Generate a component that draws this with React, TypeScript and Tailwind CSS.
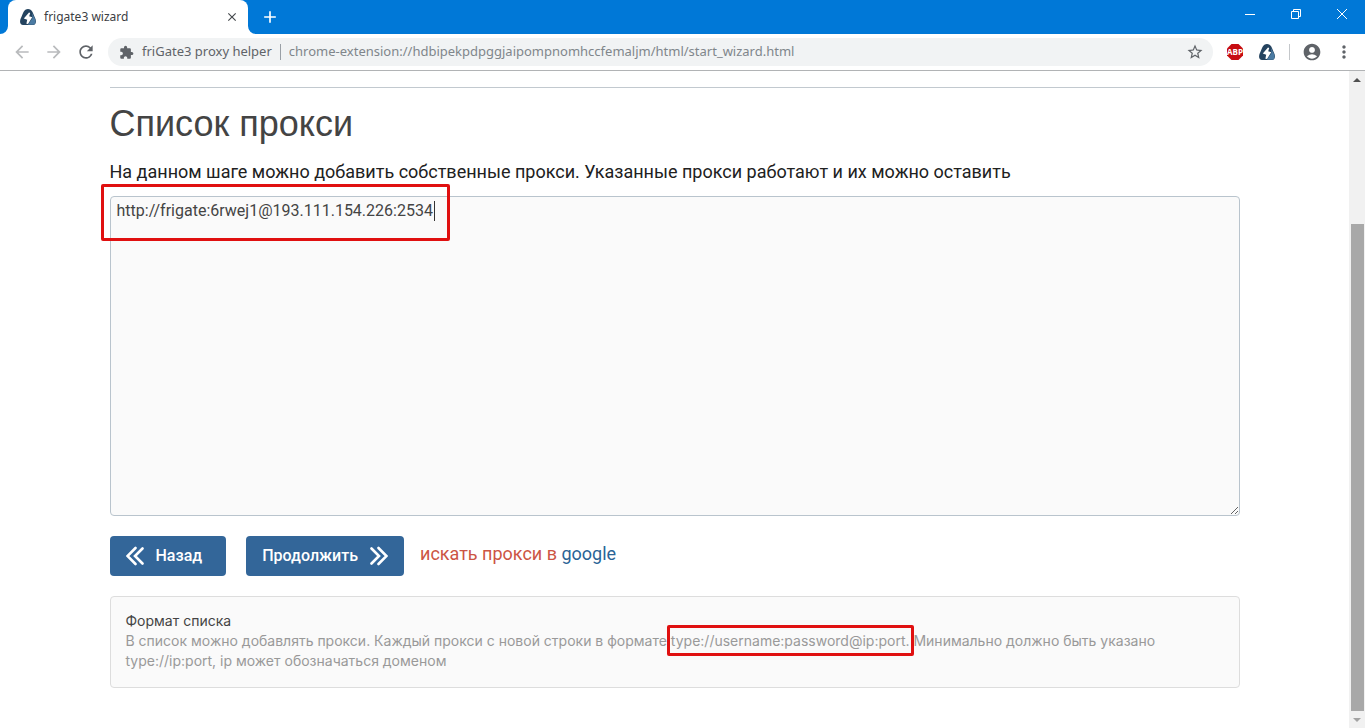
import type { ReactNode } from 'react'
import {
  MdAccountCircle,
  MdAdd,
  MdArrowBack,
  MdArrowForward,
  MdClose,
  MdExtension,
  MdMoreVert,
  MdRefresh,
  MdStarBorder,
} from 'react-icons/md'

const PAGE_URL = 'chrome-extension://hdbipekpdpggjaipompnomhccfemaljm/html/start_wizard.html'
const PROXY = 'http://frigate:6rwej1@193.111.154.226:2534'

function FrigateLogo() {
  return (
    <svg viewBox="0 0 16 16" className="w-4 h-4 shrink-0" aria-hidden="true">
      <path
        d="M8 0C10 0 11.400 1 12.500 3L15.500 10C16.500 13.400 15.600 16 13 16H3C.4 16-.5 13.400.5 10L3.500 3C4.600 1 6 0 8 0Z"
        fill="#24435f"
      />
      <path d="M12 4L15.300 10.500C16 13.800 15 15.800 12.800 15.800H8L12.500 9Z" fill="#4b7ba3" />
      <path d="M9 3.600L3.800 9.500L7.200 10.700L6.400 14.800L8 15L12.200 8.200L9.200 7.200L10.200 4Z" fill="#fff" />
    </svg>
  )
}

function AdblockLogo() {
  return (
    <svg viewBox="0 0 18 18" className="w-[18px] h-[18px]" aria-hidden="true">
      <path d="M5.500 1h7L17 5.500v7L12.500 17h-7L1 12.500v-7Z" fill="#c70d12" />
      <text x="9" y="12" textAnchor="middle" fontSize="8" fontWeight="700" fill="#fff" fontFamily="Open Sans, sans-serif">
        ABP
      </text>
    </svg>
  )
}

function DoubleChevron({ dir }: { dir: 'left' | 'right' }) {
  return (
    <svg
      viewBox="0 0 20 20"
      className="w-5 h-5"
      fill="none"
      stroke="currentColor"
      strokeWidth="2.600"
      strokeLinecap="round"
      aria-hidden="true"
    >
      {dir === 'left' ? (
        <path d="M9.500 2L1.500 10L9.500 18M16.500 2.500L9 10L16.500 17.500" />
      ) : (
        <path d="M10.500 2L18.500 10L10.500 18M3.500 2.500L11 10L3.500 17.500" />
      )}
    </svg>
  )
}

function ToolButton({ label, className = '', children }: { label: string; className?: string; children: ReactNode }) {
  return (
    <button type="button" aria-label={label} className={`flex w-8 h-7 shrink-0 items-center justify-center ${className}`}>
      {children}
    </button>
  )
}

function WindowButton({ label, children }: { label: string; children: ReactNode }) {
  return (
    <button type="button" aria-label={label} className="flex w-[46px] h-7 items-center justify-center text-white">
      <svg viewBox="0 0 12 12" className="w-3 h-3" fill="none" stroke="currentColor" aria-hidden="true">
        {children}
      </svg>
    </button>
  )
}

function TitleBar() {
  return (
    <div className="flex h-[34px] bg-[#0078d7]">
      <svg viewBox="0 0 8 8" className="w-2 h-2 self-end" aria-hidden="true">
        <path d="M8 0v8H0a8 8 0 0 0 8-8Z" fill="#fff" />
      </svg>
      <div className="flex w-60 items-center rounded-t-lg bg-white pl-3 pr-2">
        <FrigateLogo />
        <span className="ml-2 flex-1 text-xs text-[#3c4043]">frigate3 wizard</span>
        <button type="button" aria-label="Закрыть вкладку" className="flex w-4 h-4 items-center justify-center text-[#45494d]">
          <MdClose size={14} />
        </button>
      </div>
      <svg viewBox="0 0 8 8" className="w-2 h-2 self-end" aria-hidden="true">
        <path d="M0 0v8h8a8 8 0 0 1-8-8Z" fill="#fff" />
      </svg>
      <button type="button" aria-label="Новая вкладка" className="flex w-7 items-center justify-center text-white">
        <MdAdd size={20} />
      </button>
      <div className="ml-auto flex">
        <WindowButton label="Свернуть">
          <path d="M1 6.500h10" />
        </WindowButton>
        <WindowButton label="Восстановить">
          <path d="M1.500 3.500h7v7h-7zM3.500 3.500v-2h7v7h-2" />
        </WindowButton>
        <WindowButton label="Закрыть">
          <path d="M1 1l10 10M11 1L1 11" />
        </WindowButton>
      </div>
    </div>
  )
}

function Toolbar() {
  return (
    <div className="flex h-[37px] items-center border-b border-[#b1b3b5] bg-white pl-[6px] pr-[5px] text-[#5f6368]">
      <ToolButton label="Назад" className="text-[#b9bbbd]"><MdArrowBack size={20} /></ToolButton>
      <ToolButton label="Вперёд" className="text-[#b9bbbd]"><MdArrowForward size={20} /></ToolButton>
      <ToolButton label="Обновить"><MdRefresh size={20} /></ToolButton>
      <div className="mx-[6px] flex h-7 min-w-0 flex-1 items-center rounded-full bg-[#f1f3f4] pl-[11px] pr-[2px] text-[13px]">
        <MdExtension size={15} className="shrink-0" />
        <label htmlFor="address" className="ml-2 whitespace-nowrap">friGate3 proxy helper</label>
        <span className="mx-2 h-4 w-px bg-[#9aa0a6]" />
        <input
          id="address"
          type="text"
          defaultValue={PAGE_URL}
          className="min-w-0 flex-1 bg-transparent text-[#80868b] outline-none"
        />
        <ToolButton label="Добавить в закладки"><MdStarBorder size={18} /></ToolButton>
      </div>
      <ToolButton label="Adblock Plus"><AdblockLogo /></ToolButton>
      <ToolButton label="friGate"><FrigateLogo /></ToolButton>
      <span className="mx-[6px] h-4 w-px bg-[#c4c7ca]" />
      <ToolButton label="Профиль"><MdAccountCircle size={20} /></ToolButton>
      <ToolButton label="Меню"><MdMoreVert size={20} /></ToolButton>
    </div>
  )
}

function Scrollbar() {
  return (
    <div className="flex w-4 shrink-0 flex-col items-center bg-[#f1f1f1]" aria-hidden="true">
      <svg viewBox="0 0 16 17" className="w-4 h-[17px] shrink-0"><path d="M4 11h8L8 7z" fill="#505050" /></svg>
      <div className="basis-[136px]" />
      <div className="w-[13px] flex-1 bg-[#a8a8a8]" />
      <svg viewBox="0 0 16 17" className="w-4 h-[17px] shrink-0"><path d="M4 7h8l-4 4z" fill="#a3a3a3" /></svg>
    </div>
  )
}

function Wizard() {
  return (
    <main className="min-w-0 flex-1 bg-white px-4 font-[Roboto,sans-serif]">
      <div className="mx-auto max-w-[1130px] pt-4 pb-10">
        <hr className="border-[#c2c9cf]" />
        <h1 className="mt-4 font-['Liberation_Sans',sans-serif] text-4xl text-[#444]">Список прокси</h1>
        <label htmlFor="proxies" className="mt-4 block text-lg leading-6 text-[#212121]">
          На данном шаге можно добавить собственные прокси. Указанные прокси работают и их можно оставить
        </label>

        <div className="relative mt-3">
          <textarea
            id="proxies"
            spellCheck={false}
            defaultValue={PROXY}
            className="block h-80 w-full resize-y rounded border border-[#b9c4cd] bg-[#fafafa] px-[6px] py-1 text-base leading-5 text-[#444] outline-none"
          />
          <div className="absolute -left-[9px] -top-3 h-[57px] w-[349px] rounded-xs border-3 border-[#e01010]">
            <span className="absolute left-[330px] top-[14px] h-5 w-px bg-[#333]" />
          </div>
        </div>

        <div className="mt-5 flex items-center">
          <button type="button" className="flex h-10 items-center gap-[10px] rounded bg-[#336699] pl-4 pr-6 font-medium text-white">
            <DoubleChevron dir="left" />
            Назад
          </button>
          <button type="button" className="ml-5 flex h-10 items-center gap-[10px] rounded bg-[#336699] px-4 font-medium text-white">
            Продолжить
            <DoubleChevron dir="right" />
          </button>
          <p className="ml-4 pb-1 text-lg leading-6 text-[#cc5544]">
            искать прокси в <a href="#google" className="text-[#2a6496]">google</a>
          </p>
        </div>

        <section className="mt-5 rounded border border-[#ddd] bg-[#fafafa] px-[15px] pt-[14px] pb-4 font-[Inter,sans-serif] text-sm leading-5 text-[#999]">
          <h2 className="text-[#444]">Формат списка</h2>
          <p>
            В список можно добавлять прокси. Каждый прокси с новой строки в формате{' '}
            <span className="relative">
              type://username:password@ip:port.
              <span className="absolute -inset-x-1 -inset-y-[7px] rounded-xs border-3 border-[#e01010]" />
            </span>{' '}
            Минимально должно быть указано
            <br />
            type://ip:port, ip может обозначаться доменом
          </p>
        </section>
      </div>
    </main>
  )
}

export default function App() {
  return (
    <div className="flex min-h-screen flex-col font-['Noto_Sans',sans-serif]">
      <TitleBar />
      <Toolbar />
      <div className="flex flex-1">
        <Wizard />
        <Scrollbar />
      </div>
    </div>
  )
}
